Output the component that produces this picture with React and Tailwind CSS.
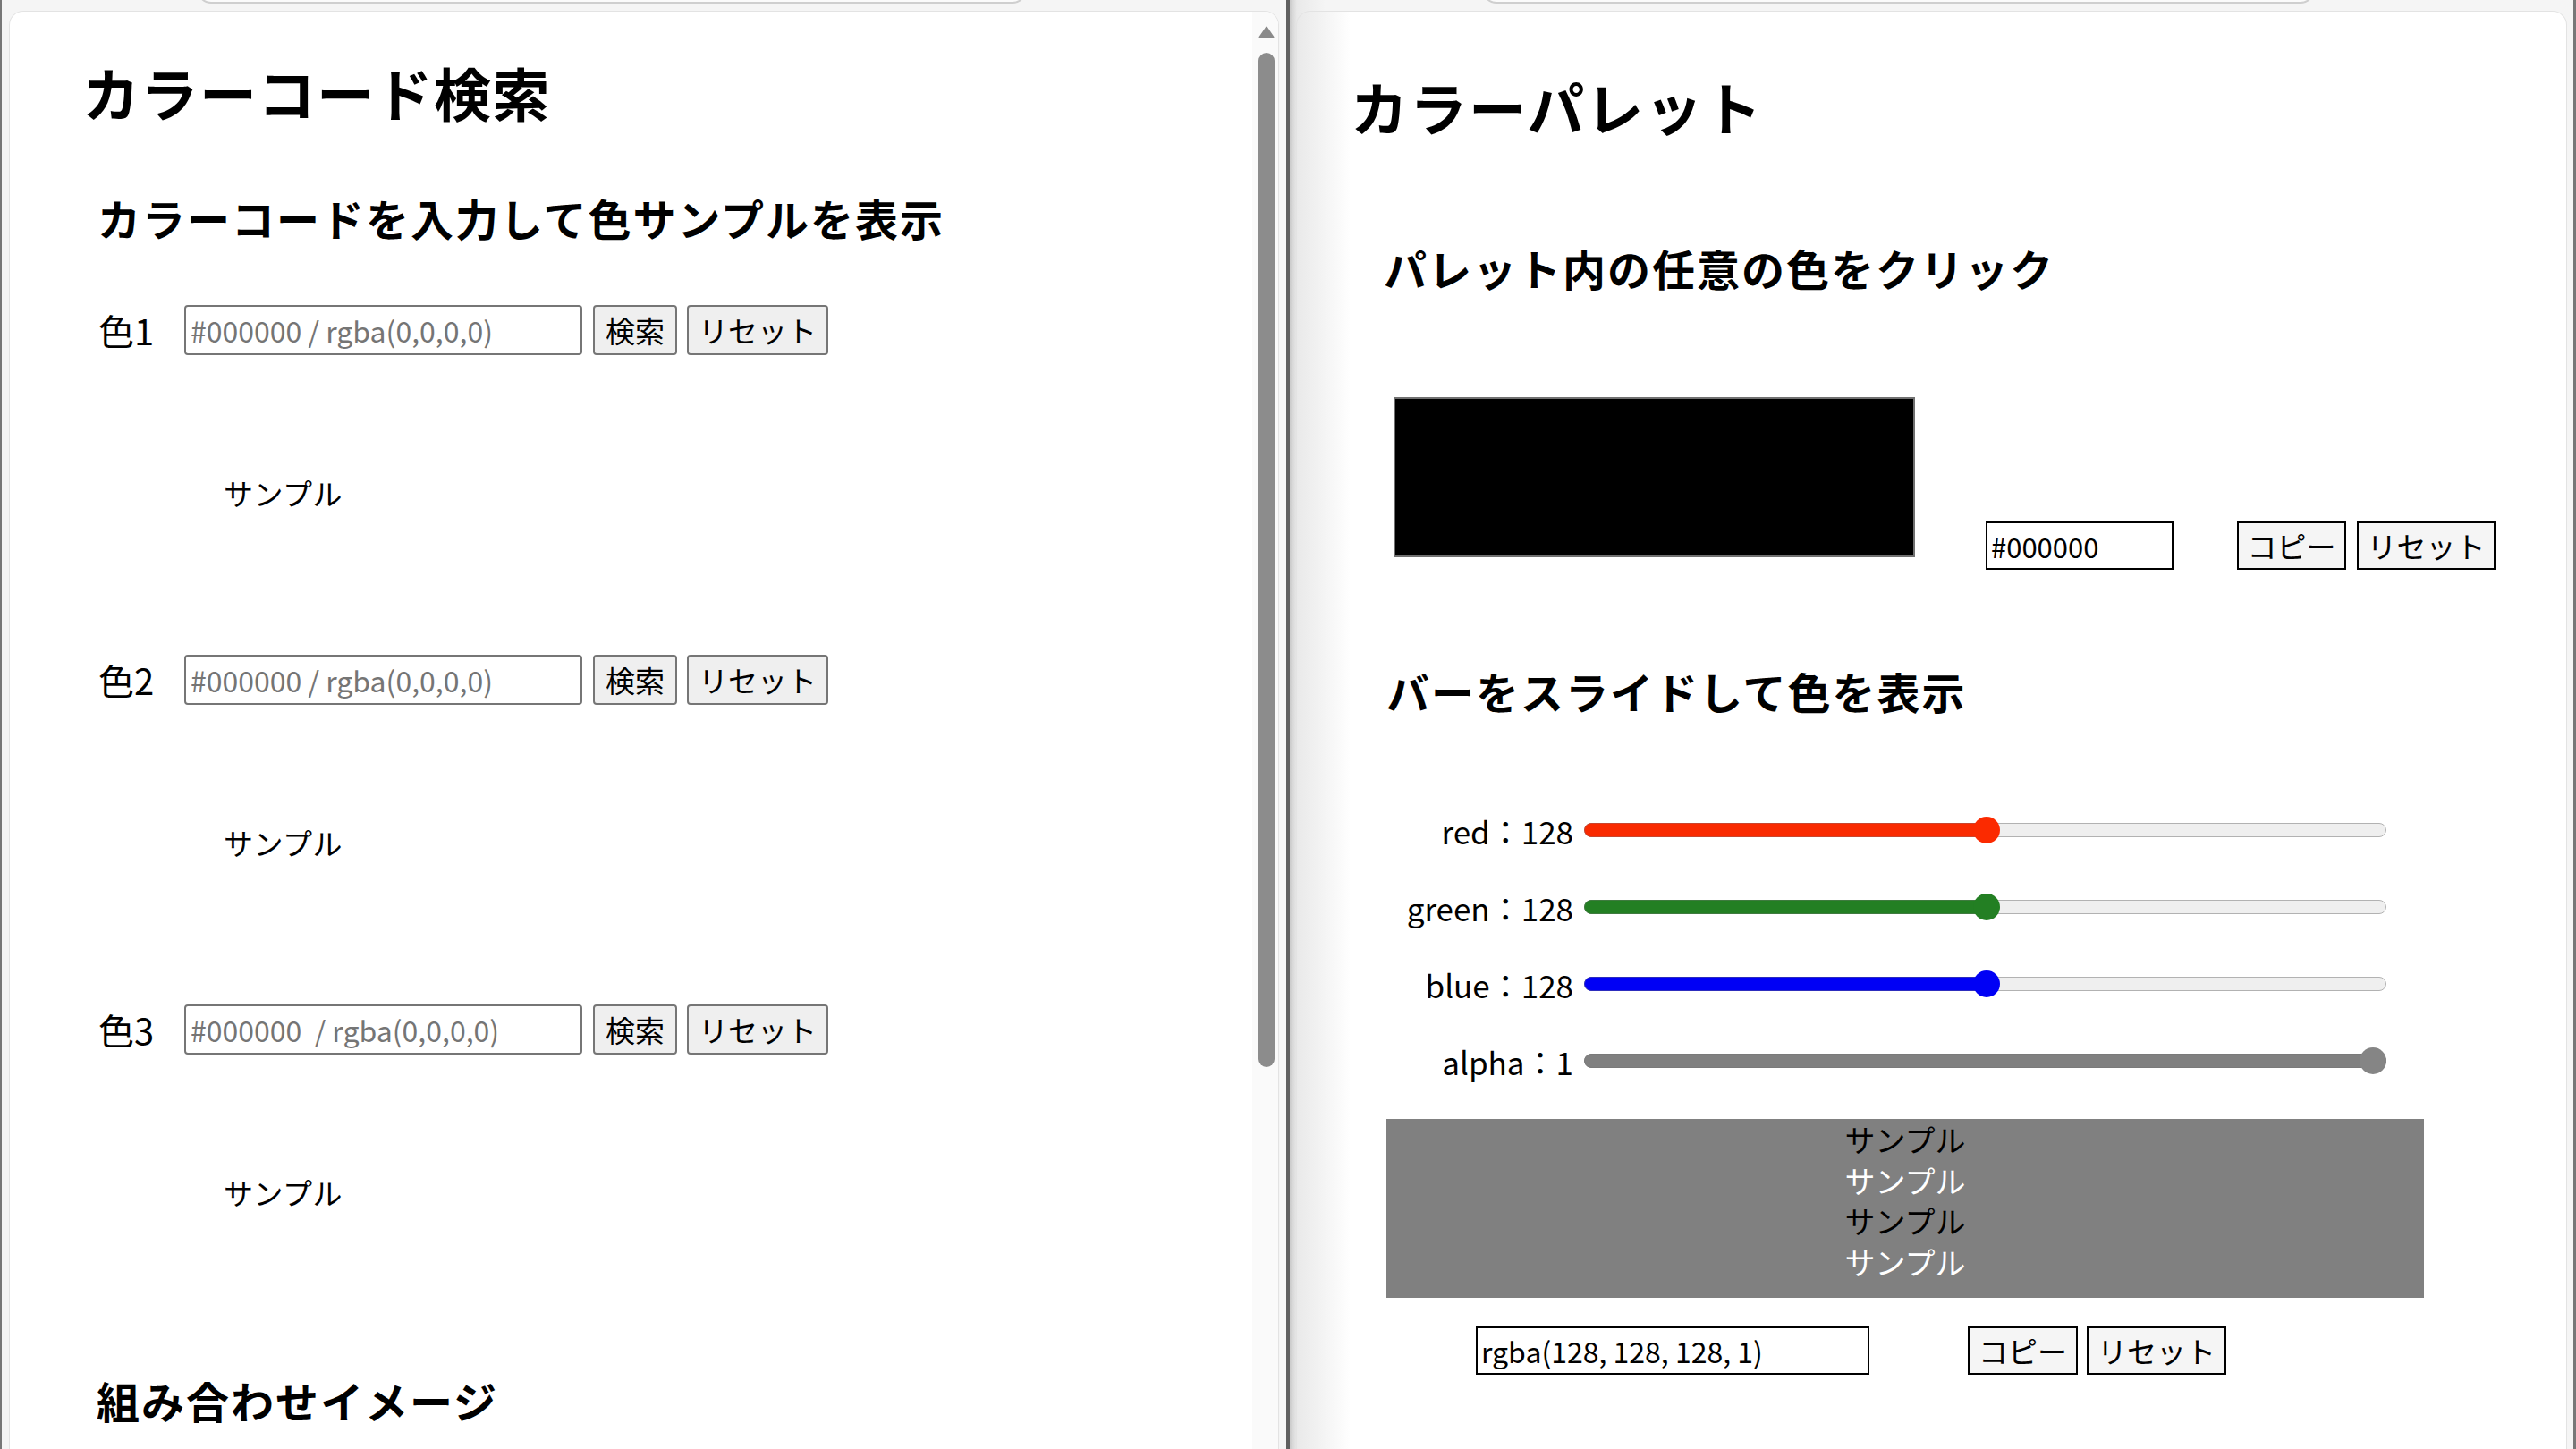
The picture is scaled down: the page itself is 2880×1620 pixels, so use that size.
import React from "react";

function TopShape({ ml, w }) {
  return (
    <div className="h-[12px] flex overflow-hidden shrink-0">
      <div
        className="shrink-0 h-[40px] mt-[-36px] rounded-[16px] border-2 border-[#cfcfcf] bg-[#fbfbfb]"
        style={{ marginLeft: ml, width: w }}
      />
    </div>
  );
}

function ColorBlock({ n, placeholder }) {
  return (
    <div className="flex flex-col">
      <div className="flex items-center h-[56px] ml-[99px]">
        <span className="w-[96px] text-[40px] leading-[56px]">色{n}</span>
        <input
          className="w-[445px] h-[56px] border-2 border-[#767676] rounded-[4px] pl-[5px] text-[32px] leading-none bg-white placeholder:text-[#757575] outline-none"
          placeholder={placeholder}
        />
        <button className="ml-[12px] w-[94px] h-[56px] border-2 border-[#767676] rounded-[4px] bg-[#efefef] text-[33px] leading-none">
          検索
        </button>
        <button className="ml-[11px] w-[158px] h-[56px] border-2 border-[#767676] rounded-[4px] bg-[#efefef] text-[33px] leading-none">
          リセット
        </button>
      </div>
      <div className="h-[335px] pt-[138px] pl-[239px]">
        <p className="text-[33px] leading-[33px] tracking-[0.5px]">サンプル</p>
      </div>
    </div>
  );
}

function Slider({ label, value, max, fill, thumb }) {
  const travel = 867;
  const center = 15 + (value / max) * travel;
  const full = value >= max;
  return (
    <div className="flex items-center h-[86px] ml-[100px]">
      <span className="w-[209px] text-right text-[35px] leading-none">{label}</span>
      <div className="ml-[12px] relative w-[897px] h-[16px] rounded-full bg-[#efefef] border border-[#b2b2b2]">
        <div
          className={
            "absolute left-[-1px] top-[-1px] h-[16px] " +
            (full ? "rounded-full " : "rounded-l-full ") +
            fill
          }
          style={{ width: full ? 897 : center }}
        />
        <div
          className={"absolute top-[-8px] w-[30px] h-[30px] rounded-full " + thumb}
          style={{ left: center - 16 }}
        />
      </div>
    </div>
  );
}

export default function App() {
  return (
    <div className="w-[2880px] h-[1620px] flex overflow-hidden bg-[#f5f5f5] text-black font-['Noto_Sans_CJK_JP',sans-serif]">
      {/* Left window */}
      <div className="flex flex-col w-[1438px] shrink-0 border-l-2 border-[#777777] pl-[8px] pr-[8px]">
        <TopShape ml={210} w={928} />
        <div className="flex-1 flex rounded-t-[16px] border border-b-0 border-[#e3e3e3] bg-white overflow-hidden">
          <div className="flex-1 flex flex-col">
            <h1 className="mt-[57px] ml-[81px] text-[64px] leading-[64px] font-bold tracking-[1.5px]">カラーコード検索</h1>
            <h2 className="mt-[85px] ml-[98px] text-[48px] leading-[48px] font-bold tracking-[2px]">
              カラーコードを入力して色サンプルを表示
            </h2>
            <div className="mt-[74px] flex flex-col">
              <ColorBlock n={1} placeholder="#000000 / rgba(0,0,0,0)" />
              <ColorBlock n={2} placeholder="#000000 / rgba(0,0,0,0)" />
              <ColorBlock n={3} placeholder="#000000  / rgba(0,0,0,0)" />
            </div>
            <h2 className="mt-[27px] ml-[97px] text-[48px] leading-[48px] font-bold tracking-[2px]">組み合わせイメージ</h2>
          </div>
          {/* scrollbar */}
          <div className="w-[29px] bg-[#fafafa] flex flex-col items-center pl-[2px]">
            <svg width="18" height="14" viewBox="0 0 18 14" className="mt-[16px] shrink-0">
              <path
                d="M9 1.5 L16.5 12.5 L1.5 12.5 Z"
                fill="#8a8a8a"
                stroke="#8a8a8a"
                strokeWidth="2"
                strokeLinejoin="round"
              />
            </svg>
            <div className="mt-[16px] w-[18px] h-[1134px] rounded-full bg-[#8c8c8c]" />
          </div>
        </div>
      </div>

      {/* Separator */}
      <div className="w-[4px] shrink-0 bg-[#5f5f5f]" />

      {/* Right window */}
      <div className="flex flex-col w-[1438px] shrink-0 pl-[7px] pr-[7px] border-r-[3px] border-[#777777] bg-[linear-gradient(to_right,#cbcbcb,#e9e9e9_8px,#f5f5f5_40px)]">
        <TopShape ml={208} w={931} />
        <div className="flex-1 flex flex-col rounded-t-[16px] border border-b-0 border-[#e3e3e3] bg-[linear-gradient(to_right,#e9e9e9,#ffffff_60px)] overflow-hidden">
          <h1 className="mt-[73px] ml-[60px] text-[64px] leading-[64px] font-bold tracking-[2px]">カラーパレット</h1>
          <h2 className="mt-[125px] ml-[97px] text-[48px] leading-[48px] font-bold tracking-[2px]">
            パレット内の任意の色をクリック
          </h2>
          <div className="mt-[121px] ml-[108px] flex items-start">
            <div className="w-[583px] h-[179px] bg-black border-2 border-[#707070]" />
            <input
              className="ml-[79px] mt-[139px] w-[210px] h-[54px] border-2 border-black bg-white pl-[4px] text-[31px] leading-none outline-none"
              defaultValue="#000000"
            />
            <button className="ml-[71px] mt-[139px] w-[122px] h-[54px] border-2 border-black bg-[#f5f5f5] text-[33px] leading-none">
              コピー
            </button>
            <button className="ml-[12px] mt-[139px] w-[155px] h-[54px] border-2 border-black bg-[#f5f5f5] text-[33px] leading-none">
              リセット
            </button>
          </div>
          <h2 className="mt-[111px] ml-[100px] text-[48px] leading-[48px] font-bold tracking-[2px]">
            バーをスライドして色を表示
          </h2>
          <div className="mt-[89px] flex flex-col">
            <Slider label="red：128" value={128} max={255} fill="bg-[#f92a00] border border-[#c8452e]" thumb="bg-[#fb2a00]" />
            <Slider label="green：128" value={128} max={255} fill="bg-[#237f23] border border-[#3f7a3f]" thumb="bg-[#237f23]" />
            <Slider label="blue：128" value={128} max={255} fill="bg-[#0000f5] border border-[#2d2dbd]" thumb="bg-[#0000f5]" />
            <Slider label="alpha：1" value={1} max={1} fill="bg-[#808080] border border-[#7a7a7a]" thumb="bg-[#858585]" />
          </div>
          <div className="mt-[22px] ml-[100px] w-[1160px] h-[200px] bg-[#808080] text-center text-[34px] leading-[45.5px]">
            <p className="text-black">サンプル</p>
            <p className="text-white">サンプル</p>
            <p className="text-black">サンプル</p>
            <p className="text-white">サンプル</p>
          </div>
          <div className="mt-[32px] ml-[200px] flex items-start">
            <input
              className="w-[440px] h-[54px] border-2 border-black bg-white pl-[4px] text-[32px] leading-none outline-none"
              defaultValue="rgba(128, 128, 128, 1)"
            />
            <button className="ml-[110px] w-[123px] h-[54px] border-2 border-black bg-[#f5f5f5] text-[33px] leading-none">
              コピー
            </button>
            <button className="ml-[10px] w-[156px] h-[54px] border-2 border-black bg-[#f5f5f5] text-[33px] leading-none">
              リセット
            </button>
          </div>
        </div>
      </div>
    </div>
  );
}
